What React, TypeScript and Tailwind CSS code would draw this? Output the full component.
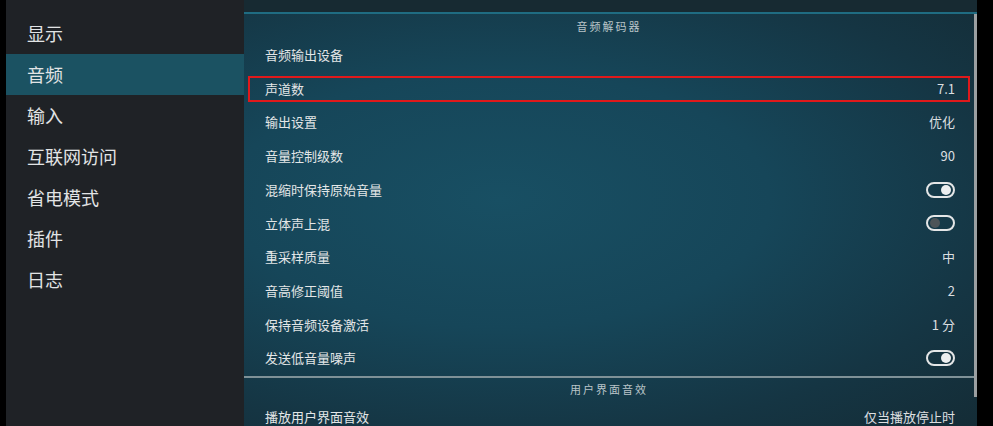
import React from "react";

type Row = {
  label: string;
  value?: string;
  toggle?: boolean;
  focused?: boolean;
};

const menu = ["显示", "音频", "输入", "互联网访问", "省电模式", "插件", "日志"];

const decoderRows: Row[] = [
  { label: "音频输出设备" },
  { label: "声道数", value: "7.1", focused: true },
  { label: "输出设置", value: "优化" },
  { label: "音量控制级数", value: "90" },
  { label: "混缩时保持原始音量", toggle: true },
  { label: "立体声上混", toggle: false },
  { label: "重采样质量", value: "中" },
  { label: "音高修正阈值", value: "2" },
  { label: "保持音频设备激活", value: "1 分" },
  { label: "发送低音量噪声", toggle: true },
];

function Toggle({ on }: { on: boolean }) {
  return (
    <div
      className={`w-[29px] h-[16px] rounded-full border-2 border-[#e4e6e7] flex items-center px-[2px] ${
        on ? "justify-end" : "justify-start"
      }`}
    >
      <div
        className={`w-[10px] h-[10px] rounded-full ${on ? "bg-[#eceeef]" : "bg-[#4d5458]"}`}
      />
    </div>
  );
}

function SettingRow({ row }: { row: Row }) {
  return (
    <div className="h-[33.7px] shrink-0 flex items-center">
      <div
        className={`flex-1 h-[26px] mx-[4px] pl-[15px] pr-[13px] flex items-center justify-between ${
          row.focused ? "border-2 border-[#e0191b]" : "border-2 border-transparent"
        }`}
      >
        <span className="text-[#e3e6e7]">{row.label}</span>
        {row.toggle !== undefined ? (
          <Toggle on={row.toggle} />
        ) : (
          row.value && <span className="text-[#dcdfe0]">{row.value}</span>
        )}
      </div>
    </div>
  );
}

export default function App() {
  return (
    <div
      className="flex h-[426px] w-[993px] bg-black overflow-hidden"
      style={{ fontFamily: '"Noto Sans CJK SC", "Noto Sans", sans-serif' }}
    >
      <div className="w-[6px] shrink-0 bg-black" />

      {/* side menu */}
      <div className="w-[238px] shrink-0 bg-[#1f2226] pt-[13px]">
        {menu.map((item) => (
          <div
            key={item}
            className={`h-[41px] flex items-center pl-[21px] text-[18px] text-[#e2e4e5] ${
              item === "音频" ? "bg-[#1b5262]" : ""
            }`}
          >
            {item}
          </div>
        ))}
      </div>

      {/* settings panel */}
      <div className="flex-1 flex flex-col min-h-0">
        <div className="h-[12px] shrink-0 bg-[#172a32]" />
        <div className="h-[2px] shrink-0 bg-[#1f6c82]" />
        <div className="flex-1 min-h-0 overflow-hidden flex bg-[radial-gradient(ellipse_at_35%_45%,#184f63_0%,#164659_40%,#153543_75%,#142c36_100%)]">
          <div className="flex-1 flex flex-col text-[13px]">
            <div className="h-[24px] shrink-0 flex items-center justify-center text-[11px] tracking-[2px] text-[#b9c4c8]">
              音频解码器
            </div>
            {decoderRows.map((row) => (
              <SettingRow key={row.label} row={row} />
            ))}
            <div className="h-[2px] shrink-0 mt-[1px] bg-[#7f9197]" />
            <div className="h-[22px] shrink-0 flex items-center justify-center text-[11px] tracking-[2px] text-[#b9c4c8]">
              用户界面音效
            </div>
            <SettingRow row={{ label: "播放用户界面音效", value: "仅当播放停止时" }} />
          </div>
          <div className="w-[3px] shrink-0 flex flex-col">
            <div className="h-[383px] bg-[#9b9fa1]" />
          </div>
        </div>
      </div>

      <div className="w-[16px] shrink-0 bg-black" />
    </div>
  );
}
